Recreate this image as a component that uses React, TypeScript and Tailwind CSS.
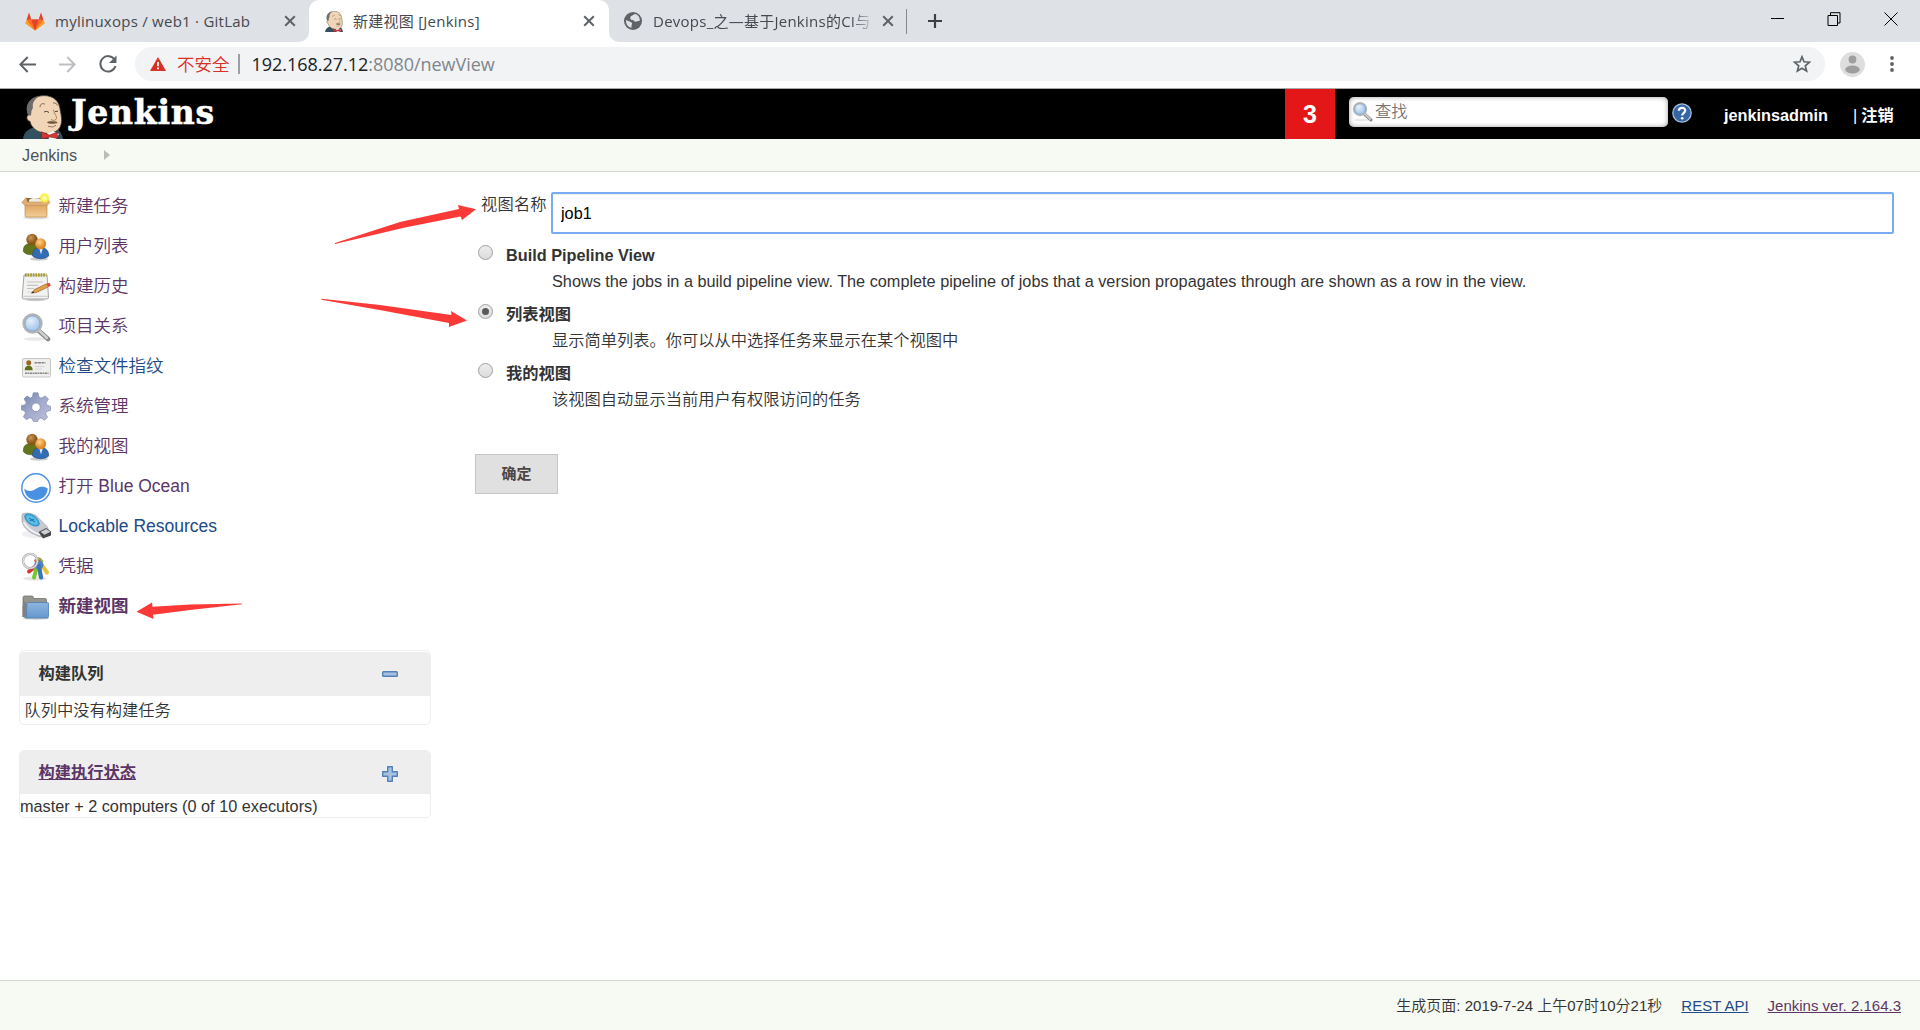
import type { ReactNode } from 'react';

function Butler({ className }: { className: string }) {
  return (
    <svg viewBox="0 0 40 45" className={className} preserveAspectRatio="none">
      <path d="M0 45 C1 38 5 35 11 33 L20 40 L33 34 C37 36 39 40 40 45Z" fill="#335061" />
      <path d="M5 20 C2 10 7 2 17 1 C28 -1 36 5 37 14 C38 20 40 27 37 33 C34 38 28 40 21 39 C14 38 8 33 7 27 C3 26 3 21 6 20Z" fill="#f0d6b7" stroke="#3a332d" strokeWidth="0.8" />
      <path d="M5.500 21 C1 11 6 3 17 1 C11 4 9 9 10 13 L8.500 16 L8 21Z" fill="#6d6b6d" />
      <path d="M17 12.500 C17 9 20 8 22 9.500 M30 8 C32 8 34 9 35 11" stroke="#7d6548" strokeWidth="1" fill="none" />
      <path d="M21 17.500 C22 16.500 25 16.500 26 18 M32 17 L35 16.500" stroke="#4a3c32" strokeWidth="1" fill="none" />
      <path d="M30.500 15 C31 20 35 22 33 25 C31.500 26.500 29 26 28 25" stroke="#a87d5a" strokeWidth="1" fill="none" />
      <path d="M24 28 C26 26 29 27 32 27 C34.500 27 35.500 29 33 29 C29 30 26 29.500 24 28Z" fill="#6a543c" />
      <path d="M25 32 Q30 34 33 31" stroke="#8a6850" strokeWidth="0.900" fill="none" />
      <path d="M24 39 L30 37 L36 40 L33 45 L26 45Z" fill="#f7f7f7" />
      <path d="M18 37.500 L26.500 41 L34 38 L35 44.500 L27 43 L19 45Z" fill="#d33833" stroke="#7b1210" strokeWidth="0.5" />
    </svg>
  );
}

function Magnifier({ className }: { className: string }) {
  return (
    <svg viewBox="0 0 30 30" className={className}>
      <defs>
        <radialGradient id="lens" cx="0.4" cy="0.35">
          <stop offset="0" stopColor="#e6f1fb" />
          <stop offset="1" stopColor="#a9caec" />
        </radialGradient>
      </defs>
      <ellipse cx="14" cy="27" rx="11" ry="1.800" fill="#e9e9e9" />
      <path d="M18 19 L27 27" stroke="#888" strokeWidth="4.600" strokeLinecap="round" />
      <path d="M18 18.500 L26 26" stroke="#cfcfcf" strokeWidth="2.400" strokeLinecap="round" />
      <circle cx="11.500" cy="11.500" r="9" fill="url(#lens)" stroke="#b4b6b4" strokeWidth="2.400" />
      <circle cx="11.500" cy="11.500" r="7.600" fill="none" stroke="#7d9fcc" strokeWidth="0.900" />
    </svg>
  );
}

function BoxIcon() {
  return (
    <svg viewBox="0 0 30 30" className="size-[30px]">
      <defs>
        <linearGradient id="carton" x1="0" y1="0" x2="0" y2="1">
          <stop offset="0" stopColor="#dba05a" />
          <stop offset="1" stopColor="#f3cd97" />
        </linearGradient>
        <radialGradient id="glow">
          <stop offset="0.2" stopColor="#fffbb0" />
          <stop offset="0.6" stopColor="#fbf03a" />
          <stop offset="1" stopColor="#fbf03a" stopOpacity="0" />
        </radialGradient>
      </defs>
      <ellipse cx="15" cy="25.500" rx="13" ry="1.800" fill="#ddd" />
      <path d="M5 6 L25 6 L25 12 L5 12Z" fill="#8c6a3d" />
      <path d="M8 8 C10 5 18 5.500 21 8 L21 11 L8 11Z" fill="#efece3" />
      <path d="M4 11 H26 V23 Q26 25 24 25 H6 Q4 25 4 23Z" fill="url(#carton)" stroke="#c08a48" strokeWidth="0.700" />
      <path d="M5 5.500 L0.800 10.500 L4 13.500 H26 L29 10.500 L25.500 5.500 L24 10 H6.500Z" fill="#dfae77" stroke="#b8884f" strokeWidth="0.500" />
      <circle cx="23.500" cy="6" r="5.800" fill="url(#glow)" />
    </svg>
  );
}

function PeopleIcon() {
  return (
    <svg viewBox="0 0 30 30" className="size-[30px]">
      <defs>
        <radialGradient id="headA" cx="0.4" cy="0.35">
          <stop offset="0" stopColor="#c99858" />
          <stop offset="1" stopColor="#8a5516" />
        </radialGradient>
        <radialGradient id="headB" cx="0.4" cy="0.35">
          <stop offset="0" stopColor="#ffd48a" />
          <stop offset="1" stopColor="#dd8a28" />
        </radialGradient>
      </defs>
      <ellipse cx="18" cy="27" rx="9" ry="1.600" fill="#ccc" />
      <path d="M2.300 19.500 C2.300 13.500 5 11.500 10 11.500 C15 11.500 18 14.500 18 21.500 C13 23.500 5 23.500 2.300 19.500Z" fill="#62751b" stroke="#43540e" strokeWidth="0.600" />
      <circle cx="11" cy="7.500" r="5.700" fill="url(#headA)" />
      <path d="M11.500 24 C11.500 18 14 15.500 19.500 15.500 C25 15.500 27.700 18.500 27.700 24 C24 27.500 15 27.500 11.500 24Z" fill="#346cb3" stroke="#204a87" strokeWidth="0.600" />
      <path d="M18 15.500 L22 15.500 L20 22.500Z" fill="#e4ecf6" />
      <circle cx="19.700" cy="11.800" r="5.500" fill="url(#headB)" />
    </svg>
  );
}

function NotepadIcon() {
  return (
    <svg viewBox="0 0 30 30" className="size-[30px]">
      <ellipse cx="14.500" cy="28" rx="10" ry="1.200" fill="#ccc" />
      <path d="M3 3 H26 L27.500 25 Q27.500 27 26 27 H2.500 Q1 27 1.200 25Z" fill="#f2f2f0" stroke="#9a9c98" strokeWidth="0.900" />
      <path d="M1.500 24.300 H27.200" stroke="#c9cac7" strokeWidth="1" />
      <path d="M4 3 H25.500" stroke="#a89b35" strokeWidth="3.600" strokeDasharray="1.700 0.900" />
      <path d="M6 10 H22 M6 13.300 H17 M6 16.500 H13" stroke="#c4c4c4" strokeWidth="1.200" />
      <path d="M6 20 H14" stroke="#d8d8d8" strokeWidth="1" />
      <path d="M10.500 21 L13.500 17.500 L25.500 11.800 L27.500 14.800 L15.500 20.500Z" fill="#e0a04c" stroke="#8a5515" strokeWidth="0.600" />
      <path d="M25.500 11.800 L28.500 10.800 Q30 12.500 29.500 14 L27.500 14.800Z" fill="#dd4b46" />
      <path d="M10.300 21.500 L12.200 19.300 L13 20.800Z" fill="#222" />
    </svg>
  );
}

function CardIcon() {
  return (
    <svg viewBox="0 0 30 30" className="size-[30px]">
      <rect x="1.500" y="6.500" width="28" height="18.500" rx="1.500" fill="#efefed" stroke="#c6c7c3" strokeWidth="1" />
      <path d="M3.700 18.200 C3.700 12 11.700 12 11.700 18.200Z" fill="#5d7117" />
      <circle cx="7.700" cy="10.800" r="2.500" fill="#9a6423" />
      <path d="M13.500 10.700 H24.500" stroke="#888" strokeWidth="1.500" strokeDasharray="3 .5" />
      <path d="M14 14.500 H23.500 M14 17 H21" stroke="#d4d4d4" strokeWidth="1" />
      <path d="M4 21.300 H27.500" stroke="#888" strokeWidth="1.400" strokeDasharray="2 .5" />
    </svg>
  );
}

function GearIcon() {
  return (
    <svg viewBox="0 0 30 30" className="size-[30px]">
      <defs>
        <linearGradient id="gear" x1="0" y1="0" x2="1" y2="1">
          <stop offset="0" stopColor="#7085ad" />
          <stop offset="0.5" stopColor="#a3abcc" />
          <stop offset="1" stopColor="#c3bedb" />
        </linearGradient>
      </defs>
      <path
        fill="url(#gear)"
        stroke="#747ea8"
        strokeWidth="0.600"
        fillRule="evenodd"
        d="M12.300 0.800 H17 L18 5.200 L20.200 6.200 L24.300 4 L27.500 7 L25 11 L26 13.200 L29.700 14.500 V18.300 L25.500 19.500 L24.500 21.800 L26.600 25.300 L23.500 28.200 L20 26 L17.700 27 L16.500 29.600 H12.400 L11.300 26.800 L8.800 25.700 L5.300 27.700 L2.400 24.700 L4.500 21.200 L3.700 19 L0.400 17.800 V13.700 L4.300 12.700 L5.300 10.400 L3 7 L6 4 L9.400 6 L11.400 5.200Z M15 11 A4.200 4.200 0 1 0 15 19.500 A4.200 4.200 0 1 0 15 11Z"
      />
    </svg>
  );
}

function OceanIcon() {
  return (
    <svg viewBox="0 0 30 30" className="mt-px size-[30px]">
      <circle cx="15" cy="15" r="14.200" fill="#fff" stroke="#4a90e2" strokeWidth="1.400" />
      <path d="M3.300 15.500 C8 20 12 17.500 16 15.200 C20 13 24 13.800 26.700 15.500 C26.500 22 21.500 27 15 27 C8.500 27 3.500 22 3.300 15.500Z" fill="#4a90e2" />
    </svg>
  );
}

function UsbIcon() {
  return (
    <svg viewBox="0 0 30 30" className="size-[30px]">
      <ellipse cx="14" cy="22" rx="13" ry="4" fill="#f0f0f0" />
      <path d="M1 2.500 C3 0.500 9 0.500 15 3.500 L26 14.500 L28 18.500 L20 25 L16 23.500 C8 20.500 2 15.500 1 9Z" fill="#c9cad1" stroke="#a0a2ab" strokeWidth="0.700" />
      <path d="M2.500 10 C6 15.500 12 20.500 19 22.500" stroke="#f2f2f6" strokeWidth="1.800" fill="none" />
      <ellipse cx="11" cy="8" rx="8.800" ry="4.800" transform="rotate(36 11 8)" fill="#3a97c8" />
      <ellipse cx="11" cy="8" rx="7" ry="3.400" transform="rotate(36 11 8)" fill="#58bfe6" />
      <path d="M8 6 L14 10 M9 8.500 L13 7.500" stroke="#1e6e9c" strokeWidth="1" />
      <path d="M17.500 20 L25 16 L30 19.500 V23.500 L22 26.500Z" fill="#4a4a4d" />
      <path d="M19.500 20 L25 17 L29.500 19.800 L23.500 22.800Z" fill="#cfd0d2" />
    </svg>
  );
}

function KeysIcon() {
  return (
    <svg viewBox="0 0 30 30" className="size-[30px]">
      <ellipse cx="14" cy="26.500" rx="12" ry="2" fill="#e6e6e6" />
      <path d="M15 14 L8 19.500" stroke="#d9363b" strokeWidth="4" strokeLinecap="round" />
      <path d="M16 14 L13 25.500" stroke="#73c92d" strokeWidth="4" strokeLinecap="round" />
      <path d="M20 12 L26 20.500" stroke="#e3c53c" strokeWidth="4" strokeLinecap="round" />
      <path d="M13 9 C15 4 22 4 22 12 L19 15Z" fill="#cf5a32" />
      <circle cx="17.800" cy="13" r="4.600" fill="#4d84c4" />
      <path d="M18 14 L20 25.500" stroke="#3c74b5" strokeWidth="4.200" strokeLinecap="round" />
      <path d="M14 8 Q19 5 22 10" stroke="#8fb84c" strokeWidth="1.800" fill="none" />
      <circle cx="9.200" cy="9" r="7.200" fill="none" stroke="#a8a8a8" strokeWidth="2.300" />
      <circle cx="9.200" cy="9" r="7.200" fill="none" stroke="#e6e6e6" strokeWidth="1.100" />
    </svg>
  );
}

function FolderIcon() {
  return (
    <svg viewBox="0 0 30 30" className="size-[30px]">
      <defs>
        <linearGradient id="folder" x1="0" y1="0" x2="0" y2="1">
          <stop offset="0" stopColor="#8fb5de" />
          <stop offset="1" stopColor="#6598cd" />
        </linearGradient>
      </defs>
      <ellipse cx="15" cy="26.500" rx="13" ry="1.200" fill="#ccc" />
      <path d="M2 25 V5.500 Q2 4 3.500 4 H11 Q12.500 4 12.500 5.500 V6.500 H24 Q25.500 6.500 25.500 8 V14 H2Z" fill="#93958f" stroke="#73756f" strokeWidth="0.800" />
      <path d="M2 8 V25 L4.500 26 L5.800 24 V12Z" fill="#80827f" />
      <path d="M5.800 11.500 Q6 10.500 7 10.500 H26.500 Q27.700 10.500 27.500 12 V24.500 Q27.500 26 26 26 H4.500 Q5.500 25.500 5.500 24Z" fill="url(#folder)" stroke="#4f7db3" strokeWidth="0.800" />
    </svg>
  );
}

const tasks: { label: string; icon: ReactNode; tone: string }[] = [
  { label: '新建任务', icon: <BoxIcon />, tone: 'text-[#5c3566]' },
  { label: '用户列表', icon: <PeopleIcon />, tone: 'text-[#5c3566]' },
  { label: '构建历史', icon: <NotepadIcon />, tone: 'text-[#5c3566]' },
  { label: '项目关系', icon: <Magnifier className="size-[30px]" />, tone: 'text-[#5c3566]' },
  { label: '检查文件指纹', icon: <CardIcon />, tone: 'text-[#204a87]' },
  { label: '系统管理', icon: <GearIcon />, tone: 'text-[#5c3566]' },
  { label: '我的视图', icon: <PeopleIcon />, tone: 'text-[#5c3566]' },
  { label: '打开 Blue Ocean', icon: <OceanIcon />, tone: 'text-[#5c3566]' },
  { label: 'Lockable Resources', icon: <UsbIcon />, tone: 'text-[#204a87]' },
  { label: '凭据', icon: <KeysIcon />, tone: 'text-[#5c3566]' },
  { label: '新建视图', icon: <FolderIcon />, tone: 'text-[#5c3566] font-bold' },
];

const viewTypes = [
  {
    name: 'Build Pipeline View',
    about: 'Shows the jobs in a build pipeline view. The complete pipeline of jobs that a version propagates through are shown as a row in the view.',
    checked: false,
  },
  { name: '列表视图', about: '显示简单列表。你可以从中选择任务来显示在某个视图中', checked: true },
  { name: '我的视图', about: '该视图自动显示当前用户有权限访问的任务', checked: false },
];

function Cross() {
  return (
    <svg viewBox="0 0 12 12" className="size-3 shrink-0">
      <path d="M1.200 1.200 L10.800 10.800 M10.800 1.200 L1.200 10.800" stroke="#5f6368" strokeWidth="2" />
    </svg>
  );
}

function TabStrip() {
  return (
    <div className="flex h-[42px] items-stretch bg-white text-[15px] text-[#45494e]">
      <div className="flex w-[309px] items-center rounded-br-[10px] bg-[#dee1e6] pl-[25px]">
        <svg viewBox="0 0 20 19" className="h-[19px] w-5">
          <path d="M10 18.500 L0.300 11.300 L2.800 7.500 H17.200 L19.700 11.300Z" fill="#fc6d26" />
          <path d="M10 18.500 L0.300 11.300 L1.500 8Z M10 18.500 L19.700 11.300 L18.500 8Z" fill="#fca326" />
          <path d="M10 18.500 L6.300 7.500 H13.700Z" fill="#e24329" />
          <path d="M1.500 8 L4 0.500 L6.400 7.500Z M18.500 8 L16 0.500 L13.600 7.500Z" fill="#e24329" />
        </svg>
        <span className="ml-2.5 w-[229px] whitespace-nowrap tracking-[0.250px]">mylinuxops / web1 · GitLab</span>
        <Cross />
      </div>
      <div className="w-[300px] bg-[#dee1e6]">
        <div className="flex h-full items-center rounded-t-[10px] bg-white pl-4">
          <Butler className="h-[21px] w-[18px]" />
          <span className="ml-2.5 w-[230px] whitespace-nowrap tracking-[0.250px]">新建视图 [Jenkins]</span>
          <Cross />
        </div>
      </div>
      <div className="flex flex-1 items-center rounded-bl-[10px] bg-[#dee1e6] pl-[15px]">
        <svg viewBox="0 0 18 18" className="size-[18px]">
          <circle cx="9" cy="9" r="9" fill="#5f6368" />
          <path d="M10.500 2 C8 4 6 4 6.300 6.500 C7 9 10 7.500 10.500 9.500 C12 10 13.500 9 15.800 8.700 C16 5 13.500 2 10.500 2Z M2 8 C4 9 6.500 9.500 8 11 C8.500 12 7 13 7.500 15.800 C4.500 15.500 1.500 12 2 8Z" fill="#dee1e6" />
        </svg>
        <span className="ml-[11px] w-[222px] whitespace-nowrap tracking-[0.250px] [mask-image:linear-gradient(to_right,black_198px,transparent_222px)]">Devops_之—基于Jenkins的CI与</span>
        <span className="ml-[7px] flex"><Cross /></span>
        <span className="ml-3 h-[25px] w-px bg-[#85888c]" />
        <svg viewBox="0 0 16 16" className="ml-5 size-4">
          <path d="M8 1 V15 M1 8 H15" stroke="#3c4043" strokeWidth="2.200" />
        </svg>
        <div className="ml-auto flex items-center gap-[43px] pr-[22px] pb-[5px]">
          <span className="h-px w-[13px] bg-black" />
          <svg viewBox="0 0 14 14" className="size-3.5">
            <path d="M1 3.500 H10.500 V13.500 H1Z M3.500 3 V0.700 H13 V11 H11" fill="none" stroke="#000" strokeWidth="1" />
          </svg>
          <svg viewBox="0 0 14 14" className="size-3.5">
            <path d="M0.500 0.500 L13.500 13.500 M13.500 0.500 L0.500 13.500" stroke="#000" strokeWidth="1" />
          </svg>
        </div>
      </div>
    </div>
  );
}

function AddressBar() {
  return (
    <div className="flex h-[47px] items-start border-b border-[#a9a9a9] bg-white pt-[5px]">
      <div className="flex h-[34px] w-[135px] items-center gap-[23px] pl-[19px]">
        <svg viewBox="0 0 17 17" className="size-[17px]">
          <path d="M17 8.500 H1.500 M8.700 1 L1.300 8.500 L8.700 16" fill="none" stroke="#5f6368" strokeWidth="2" />
        </svg>
        <svg viewBox="0 0 17 17" className="size-[17px]">
          <path d="M0 8.500 H15.500 M8.300 1 L15.700 8.500 L8.300 16" fill="none" stroke="#bdbfc2" strokeWidth="2" />
        </svg>
        <svg viewBox="0 0 18 18" className="size-[18px]">
          <path d="M15.500 4.500 A7.700 7.700 0 1 0 16.500 11" fill="none" stroke="#5f6368" strokeWidth="2" />
          <path d="M17.500 0.500 V8 H10Z" fill="#5f6368" />
        </svg>
      </div>
      <div className="flex h-[34px] w-[1690px] items-center rounded-full bg-[#f1f3f4] pl-[15px] pr-3.5">
        <svg viewBox="0 0 16 14" className="h-3.5 w-4">
          <path d="M8 0 L16 14 H0Z" fill="#d93025" />
          <path d="M7.100 5 H8.900 V9.300 H7.100Z M7.100 10.500 H8.900 V12.200 H7.100Z" fill="#fff" />
        </svg>
        <span className="ml-[11px] text-[17.500px] font-[350] text-[#d93025]">不安全</span>
        <span className="ml-2 mr-[9px] h-5 w-0.5 bg-[#9aa0a6]" />
        <span className="ml-[3px] whitespace-nowrap text-[18px] tracking-[-0.030px] text-[#202124]">
          192.168.27.12<span className="text-[#80868b]">:8080/newView</span>
        </span>
        <svg viewBox="0 0 18 18" className="ml-auto size-[18px]">
          <path d="M9 1.800 L11 6.800 L16.500 7.200 L12.300 10.800 L13.600 16 L9 13.200 L4.400 16 L5.700 10.800 L1.500 7.200 L7 6.800Z" fill="none" stroke="#5f6368" strokeWidth="1.700" />
        </svg>
      </div>
      <div className="flex h-[34px] flex-1 items-center pl-[15px]">
        <svg viewBox="0 0 25 25" className="size-[25px]">
          <circle cx="12.500" cy="12.500" r="12.500" fill="#dedede" />
          <circle cx="12.500" cy="7.500" r="3.900" fill="#9e9e9e" />
          <ellipse cx="12.500" cy="17.500" rx="7.300" ry="4" fill="#9e9e9e" />
        </svg>
        <svg viewBox="0 0 4 16" className="ml-[25px] h-4 w-1">
          <circle cx="2" cy="2" r="1.900" fill="#5f6368" />
          <circle cx="2" cy="8" r="1.900" fill="#5f6368" />
          <circle cx="2" cy="14" r="1.900" fill="#5f6368" />
        </svg>
      </div>
    </div>
  );
}

function Header() {
  return (
    <header className="flex h-[50px] bg-black text-white">
      <div className="flex w-[1285px] items-start pl-[23px]">
        <Butler className="mt-[6px] h-11 w-10" />
        <span className="ml-2 mt-[3px] font-['DejaVu_Serif'] text-[33px] font-bold leading-[42px] tracking-[0.750px] [-webkit-text-stroke:0.600px_white]">Jenkins</span>
      </div>
      <div className="flex w-[50px] items-center justify-center bg-[#e31717] pt-0.5 text-[25px] font-bold">3</div>
      <div className="ml-3.5 mt-2 flex h-[30px] w-[319px] items-start rounded-[5px] bg-white pl-[3px] pt-[4px] shadow-[inset_0_0_5px_#999]">
        <Magnifier className="size-[21px]" />
        <span className="ml-[2px] text-[16.250px] leading-5 text-[#757575]">查找</span>
      </div>
      <svg viewBox="0 0 20 20" className="ml-1 mt-3.5 size-5">
        <circle cx="10" cy="10" r="9.200" fill="#3465a4" stroke="#a9bdd9" strokeWidth="1.300" />
        <path d="M6.800 7.700 C7 3.800 13.300 3.900 13.200 7.600 C13.100 9.800 10.200 9.900 10.200 12.400" fill="none" stroke="#fff" strokeWidth="2.200" />
        <circle cx="10.200" cy="15.200" r="1.300" fill="#fff" />
      </svg>
      <div className="ml-8 mt-[15px] flex whitespace-nowrap text-[16.250px] font-bold leading-[22px]">
        <span className="w-[129px]">jenkinsadmin</span>
        <span className="font-normal">|</span>
        <span className="ml-[4px]">注销</span>
      </div>
    </header>
  );
}

function Sidebar() {
  return (
    <aside className="w-[450px] pl-[19px] pt-[15px]">
      <nav>
        {tasks.map((t) => (
          <a key={t.label} className={`flex h-10 items-center gap-[7.500px] pl-0.5 text-[17.500px] ${t.tone}`}>
            {t.icon}
            <span className="pb-[2px] leading-6">{t.label}</span>
          </a>
        ))}
      </nav>
      <section className="mt-[23px] h-[75px] w-[412px] overflow-hidden rounded-[5px] border border-[#eee] pt-px">
        <div className="flex h-11 items-center justify-between rounded-t-[4px] bg-[#eee] pl-[18.500px] pr-8">
          <h2 className="pb-0.5 font-bold">构建队列</h2>
          <svg viewBox="0 0 16 6" className="h-1.5 w-4">
            <rect x="0.700" y="0.700" width="14.600" height="4.600" rx="0.800" fill="#a5c2e3" stroke="#5580b5" strokeWidth="1.400" />
          </svg>
        </div>
        <p className="pl-[4.500px] leading-7">队列中没有构建任务</p>
      </section>
      <section className="mt-[25px] h-[68px] w-[412px] overflow-hidden rounded-[5px] border border-[#eee]">
        <div className="flex h-[43px] items-center justify-between bg-[#eee] pl-[18.500px] pr-8">
          <h2 className="font-bold text-[#5c3566] underline">构建执行状态</h2>
          <svg viewBox="0 0 16 16" className="mt-[3px] size-4">
            <path d="M5.700 0.700 H10.300 V5.700 H15.300 V10.300 H10.300 V15.300 H5.700 V10.300 H0.700 V5.700 H5.700Z" fill="#a5c2e3" stroke="#5580b5" strokeWidth="1.400" strokeLinejoin="round" />
          </svg>
        </div>
        <p className="leading-6">master + 2 computers (0 of 10 executors)</p>
      </section>
    </aside>
  );
}

function Radio({ checked }: { checked: boolean }) {
  return (
    <span className="mt-px flex size-[15px] shrink-0 items-center justify-center rounded-full border border-[#a0a0a0] bg-linear-to-b from-[#ededed] to-[#dcdcdc]">
      {checked && <span className="size-[7px] rounded-full bg-[#5a5a5a]" />}
    </span>
  );
}

function ViewForm() {
  return (
    <main className="flex-1 pt-5 pr-[26px]">
      <div className="flex items-start">
        <label className="w-[101px] pl-[31px] leading-6 tracking-[0.200px]">视图名称</label>
        <input
          readOnly
          value="job1"
          className="h-[42px] flex-1 rounded-[2px] border-2 border-[#7aacf5] bg-white px-2 text-black shadow-[inset_0_1px_1px_rgba(0,0,0,0.08)] outline-none"
        />
      </div>
      <div className="mt-[9px] pl-7">
        {viewTypes.map((v) => (
          <div key={v.name} className="h-[59px]">
            <div className="flex items-start gap-[13px] pt-px">
              <Radio checked={v.checked} />
              <span className="font-bold leading-[22px]">{v.name}</span>
            </div>
            <p className="pl-[74px] pt-1 leading-[22px]">{v.about}</p>
          </div>
        ))}
      </div>
      <button className="ml-[25px] mt-[34px] flex h-10 w-[83px] items-center justify-center border border-[#c6c6c6] bg-[#e0e0e0] text-[15px] font-bold text-[#4d4545]">
        确定
      </button>
    </main>
  );
}

export default function App() {
  return (
    <div className="relative flex h-[1030px] w-[1920px] flex-col overflow-hidden bg-white font-['Liberation_Sans','Noto_Sans_CJK_SC',sans-serif] text-[16.250px] font-[350] text-[#333]">
      <div className="font-['Open_Sans','Noto_Sans_CJK_SC',sans-serif] font-normal">
        <TabStrip />
        <AddressBar />
      </div>
      <Header />
      <div className="flex h-[33px] items-center border-b border-[#d3d7cf] bg-[#f6faf2] pl-[22px] text-[#4d545d]">
        Jenkins
        <svg viewBox="0 0 6 10" className="ml-[27px] h-2.5 w-1.5">
          <path d="M0 0 L6 5 L0 10Z" fill="#babdb6" />
        </svg>
      </div>
      <div className="flex flex-1">
        <Sidebar />
        <ViewForm />
      </div>
      <footer className="flex h-[50px] items-center justify-end gap-[19px] border-t border-[#d3d7cf] bg-[#f6faf2] pr-[19px] pt-0.5 text-[15px]">
        <span>生成页面: 2019-7-24 上午07时10分21秒</span>
        <a className="text-[#204a87] underline">REST API</a>
        <a className="text-[#5c3566] underline">Jenkins ver. 2.164.3</a>
      </footer>
      <svg viewBox="0 0 1920 1030" className="pointer-events-none absolute inset-0 h-full w-full" fill="#fb3a38">
        <path d="M335 243 L335 244 L405 227.500 L460.500 216.500 L462 220 L476 209.300 L458 205 L459 209 L400 222Z" />
        <path d="M321.500 298.700 L321.500 299.800 L385 311 L449 323 L449 327 L467 320.500 L451 311 L451.500 315 L380 305Z" />
        <path d="M242 603.500 L190 604.500 L152.500 606.800 L152 602.500 L136.500 611.700 L153.500 619 L153 614.800 L190 610 L242 604.300Z" />
      </svg>
    </div>
  );
}
